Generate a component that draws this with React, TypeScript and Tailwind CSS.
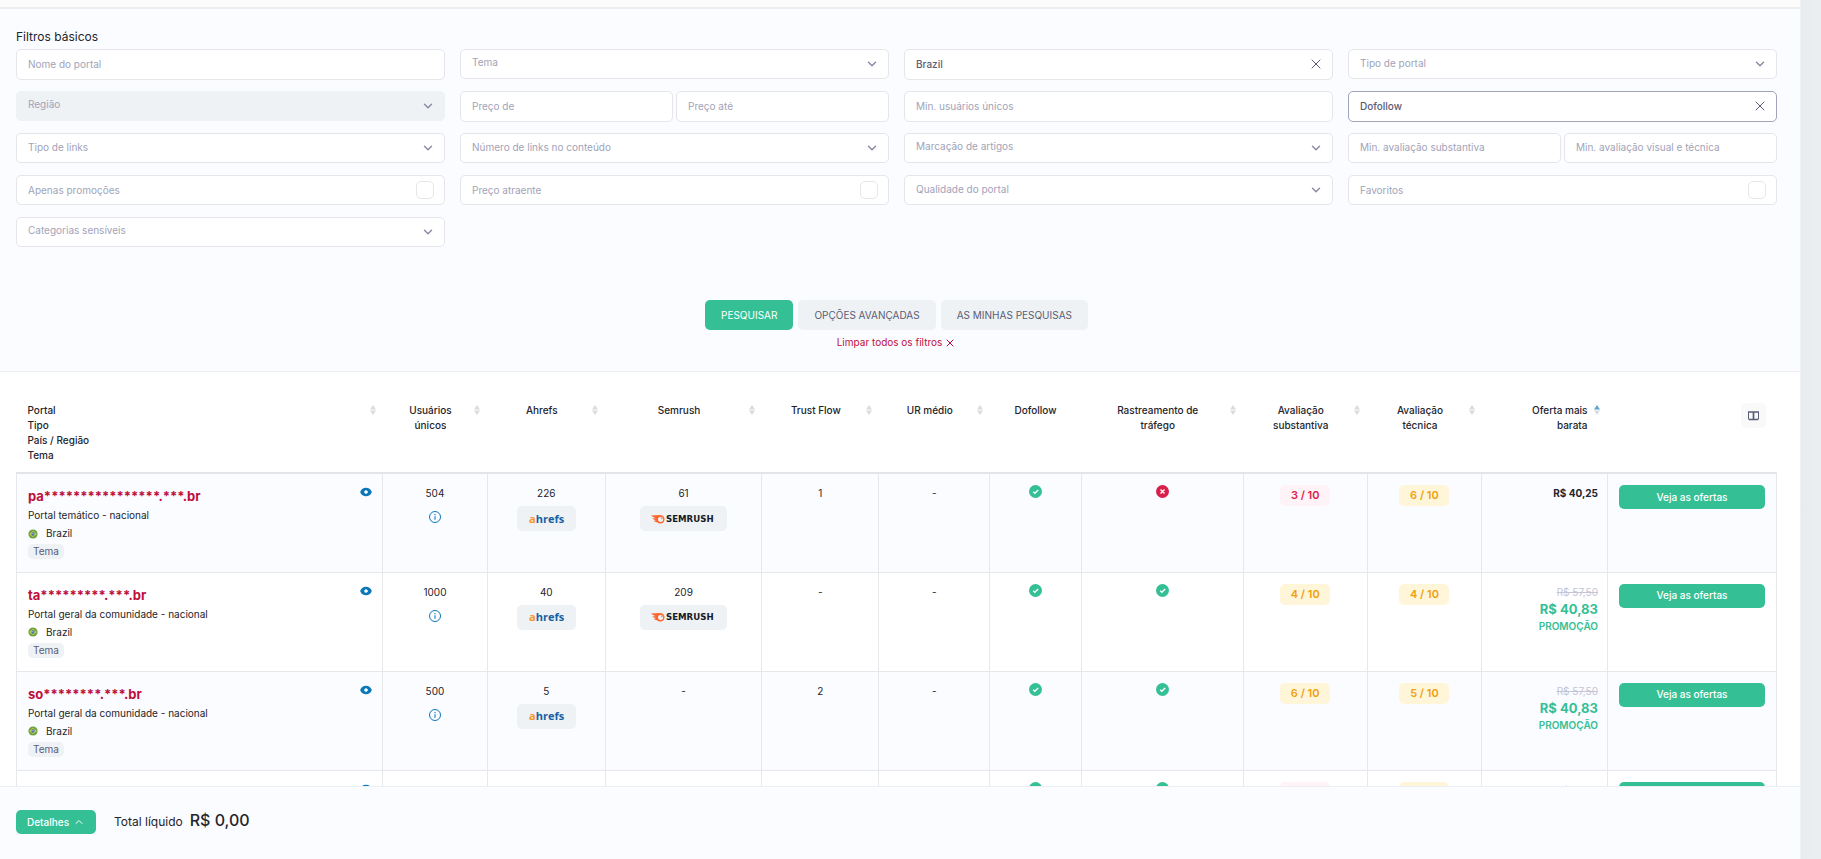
import type { ReactNode } from 'react';
import { ChevronDown, ChevronUp, X, Eye } from 'lucide-react';

type Site = {
  name: string;
  kind: string;
  users: string;
  ahrefs: string;
  semrush: string | null;
  trust: string;
  tracking: boolean;
  content: number;
  technical: number;
  price: string;
  oldPrice?: string;
};

const SITES: Site[] = [
  { name: 'pa****************.***.br', kind: 'Portal temático - nacional', users: '504', ahrefs: '226', semrush: '61', trust: '1', tracking: false, content: 3, technical: 6, price: 'R$ 40,25' },
  { name: 'ta*********.***.br', kind: 'Portal geral da comunidade - nacional', users: '1000', ahrefs: '40', semrush: '209', trust: '-', tracking: true, content: 4, technical: 4, price: 'R$ 40,83', oldPrice: 'R$ 57,50' },
  { name: 'so********.***.br', kind: 'Portal geral da comunidade - nacional', users: '500', ahrefs: '5', semrush: null, trust: '2', tracking: true, content: 6, technical: 5, price: 'R$ 40,83', oldPrice: 'R$ 57,50' },
  { name: 'jo********.***.br', kind: 'Portal geral da comunidade - nacional', users: '500', ahrefs: '12', semrush: null, trust: '-', tracking: true, content: 3, technical: 5, price: 'R$ 40,83', oldPrice: 'R$ 57,50' },
];

const COLUMNS = [
  { label: 'Usuários únicos', pad: 'pl-[11px] pr-5', sortable: true },
  { label: 'Ahrefs', pad: 'pl-[11px] pr-5', sortable: true },
  { label: 'Semrush', pad: 'pl-[11px] pr-5', sortable: true },
  { label: 'Trust Flow', pad: 'pl-[11px] pr-5', sortable: true },
  { label: 'UR médio', pad: 'pl-[11px] pr-5', sortable: true },
  { label: 'Dofollow', pad: 'px-[11px]', sortable: false },
  { label: 'Rastreamento de tráfego', pad: 'pl-[23px] pr-8', sortable: true },
  { label: 'Avaliação substantiva', pad: 'pl-[11px] pr-5', sortable: true },
  { label: 'Avaliação técnica', pad: 'pl-[11px] pr-5', sortable: true },
];

function TextField({ label, short }: { label: string; short?: boolean }) {
  return (
    <input
      type="text"
      aria-label={label}
      placeholder={label}
      className={`w-full min-w-0 rounded-[5px] border border-[#e4e6e9] bg-white px-[11px] pb-[2px] text-[10px] text-[#5a5c75] placeholder:text-[#a1a3b9] ${short ? 'h-[30px]' : 'h-[31px]'}`}
    />
  );
}

function SelectField({ label, raised, disabled }: { label: string; raised?: boolean; disabled?: boolean }) {
  return (
    <div className="relative">
      <select
        aria-label={label}
        disabled={disabled}
        className={`h-[30px] w-full appearance-none rounded-[5px] border px-[11px] text-[10px] text-[#a1a3b9] opacity-100 ${raised ? 'pb-1' : 'pb-px'} ${disabled ? 'border-[#eef2f5] bg-[#eef2f5]' : 'border-[#e4e6e9] bg-white'}`}
      >
        <option>{label}</option>
      </select>
      <ChevronDown size={14} strokeWidth={2.5} className="pointer-events-none absolute top-2 right-[10px] text-[#8a8ca5]" />
    </div>
  );
}

function ChosenField({ label, value, active }: { label: string; value: string; active?: boolean }) {
  return (
    <div className="relative">
      <select
        aria-label={label}
        className={`h-[31px] w-full appearance-none rounded-[5px] border bg-white px-[11px] text-[10px] font-medium text-[#5a5c75] ${active ? 'border-[#a1a3b9]' : 'border-[#e4e6e9]'}`}
      >
        <option>{value}</option>
      </select>
      <button type="button" aria-label={`Limpar ${label}`} className="absolute top-[7px] right-[9px] text-[#5a5c75]">
        <X size={16} strokeWidth={1.5} />
      </button>
    </div>
  );
}

function CheckField({ label }: { label: string }) {
  return (
    <label className="flex h-[30px] items-center justify-between rounded-[5px] border border-[#e4e6e9] bg-white pr-[10px] pl-[11px] text-[10px] text-[#a1a3b9]">
      {label}
      <input type="checkbox" className="size-[18px] appearance-none rounded-[5px] border border-[#e4e6e9] bg-white" />
    </label>
  );
}

function SortArrows({ active }: { active?: boolean }) {
  return (
    <svg width="6" height="10" viewBox="0 0 6 10" className="absolute top-2 right-[7px]">
      <path d="M3 0 L6 4.6 H0 Z" fill={active ? '#5ba3d0' : '#d9dbde'} />
      <path d="M3 10 L6 5.6 H0 Z" fill="#d9dbde" />
    </svg>
  );
}

function Flag() {
  return (
    <svg width="10" height="10" viewBox="0 0 10 10">
      <circle cx="5" cy="5" r="4.6" fill="#6da544" />
      <path d="M5 2 L8.7 5 L5 8 L1.3 5 Z" fill="#d8cf45" />
      <circle cx="5" cy="5" r="1.7" fill="#2463b4" />
      <path d="M3.5 4.6 Q5 4.3 6.5 5.6" stroke="#f0f0f0" strokeWidth="0.6" fill="none" />
    </svg>
  );
}

function InfoIcon() {
  return (
    <svg width="12" height="12" viewBox="0 0 12 12" fill="none" stroke="#0d78b8">
      <circle cx="6" cy="6" r="5.5" />
      <path d="M6 5.2 V8.8 M6 3 V4.2" strokeWidth="1.1" />
    </svg>
  );
}

function StatusIcon({ ok }: { ok: boolean }) {
  return (
    <svg width="13" height="13" viewBox="0 0 13 13" className="mx-auto" fill="none" stroke="#fff" strokeWidth="1.4">
      <circle cx="6.5" cy="6.5" r="6.5" fill={ok ? '#35bf95' : '#d91f4a'} stroke="none" />
      {ok ? <path d="M4.2 6.8 L5.8 8.2 L9.2 4.9" /> : <path d="M4.5 4.5 L8.5 8.5 M8.5 4.5 L4.5 8.5" />}
    </svg>
  );
}

function AhrefsLogo() {
  return (
    <svg width="37" height="14" viewBox="0 0 37 14" role="img" aria-label="ahrefs">
      <text x="1" y="11" fontFamily="'Open Sans', sans-serif" fontSize="11" fontWeight="700">
        <tspan fill="#f9962c">a</tspan>
        <tspan fill="#1561a4">hrefs</tspan>
      </text>
    </svg>
  );
}

function SemrushLogo() {
  return (
    <svg width="65" height="12" viewBox="0 0 65 12" role="img" aria-label="Semrush">
      <path
        d="M0 2.6 C3 2.4 6 2 9.4 2 A4.3 4.3 0 1 1 6 9.2 C4.6 9 3.4 8.6 2.8 7.8 L5 7.6 C3.6 7 2.2 6.2 1.2 5.2 L4.8 5.2 C3 4.4 1 3.6 0 2.6 Z"
        fill="#ff642d"
      />
      <circle cx="9.6" cy="6.3" r="2.6" fill="#eef2f5" />
      <path d="M9.6 4.7 A1.6 1.6 0 0 1 11.2 6.3" stroke="#ff642d" strokeWidth="0.9" fill="none" />
      <text x="15" y="9" fontFamily="'DejaVu Sans', sans-serif" fontSize="8.6" fontWeight="700" fill="#171a22">
        SEMRUSH
      </text>
    </svg>
  );
}

function LogoBadge({ children }: { children: ReactNode }) {
  return (
    <button type="button" className="mt-[5px] inline-flex h-[25px] items-center rounded-[5px] bg-[#eef2f5] px-[11px]">
      {children}
    </button>
  );
}

function Score({ value }: { value: number }) {
  return (
    <span
      className={`inline-flex h-[21px] w-[50px] items-center justify-center rounded-[5px] text-[11px] font-semibold ${value < 4 ? 'bg-[#fff3f7] text-[#d91f4a]' : 'bg-[#fff6da] text-[#f0a00c]'}`}
    >
      {value} / 10
    </span>
  );
}

function SiteRow({ site }: { site: Site }) {
  const cell = 'border border-[#e6e8eb] px-[11px] pt-[11px] text-center align-top';
  return (
    <tr className="h-[99px] odd:bg-[#fbfcff]">
      <td className="border border-[#e6e8eb] pt-[11px] pr-[10px] pl-[11px] align-top">
        <div className="flex items-start justify-between">
          <a href="#" className="pt-[3px] text-[13px] leading-[17px] font-bold text-[#be0f3c]">
            {site.name}
          </a>
          <button type="button" aria-label="Ocultar portal" className="pt-px">
            <Eye size={12} fill="#0d78b8" stroke="#0d78b8" strokeWidth={3} className="[&_circle]:fill-white [&_circle]:stroke-white [&_circle]:stroke-1" />
          </button>
        </div>
        <div className="mt-[3px] leading-[15px]">{site.kind}</div>
        <div className="mt-[3px] flex items-center gap-2 leading-[15px]">
          <Flag />
          Brazil
        </div>
        <span className="mt-[3px] block w-fit rounded-[5px] bg-[#eef2f5] px-[5px] leading-[15px] text-[#5a5c75]">Tema</span>
      </td>
      <td className={cell}>
        <div className="leading-4">{site.users}</div>
        <button type="button" aria-label="Informações" className="mt-[10px]">
          <InfoIcon />
        </button>
      </td>
      <td className={cell}>
        <div className="leading-4">{site.ahrefs}</div>
        <LogoBadge><AhrefsLogo /></LogoBadge>
      </td>
      <td className={cell}>
        <div className="leading-4">{site.semrush ?? '-'}</div>
        {site.semrush && <LogoBadge><SemrushLogo /></LogoBadge>}
      </td>
      <td className={cell}><div className="leading-4">{site.trust}</div></td>
      <td className={cell}><div className="leading-4">-</div></td>
      <td className={cell}><StatusIcon ok /></td>
      <td className={cell}><StatusIcon ok={site.tracking} /></td>
      <td className={cell}><Score value={site.content} /></td>
      <td className={cell}><Score value={site.technical} /></td>
      <td className="border border-[#e6e8eb] px-[9px] pt-[11px] text-right align-top">
        {site.oldPrice ? (
          <>
            <del className="block leading-4 text-[#c3c4d4]">{site.oldPrice}</del>
            <div className="text-[13px] leading-[18px] font-bold text-[#35bf95]">{site.price}</div>
            <div className="text-[10px] leading-4 font-semibold text-[#35bf95]">PROMOÇÃO</div>
          </>
        ) : (
          <div className="leading-4 font-bold">{site.price}</div>
        )}
      </td>
      <td className={cell}>
        <button type="button" className="block h-6 w-full rounded-[5px] bg-[#35bf95] text-[10px] font-medium text-white">
          Veja as ofertas
        </button>
      </td>
    </tr>
  );
}

export default function App() {
  return (
    <div className="flex h-screen bg-[#ebeff2] font-[Inter,sans-serif] text-[10px] text-[#23242c]">
      <div className="flex min-w-0 flex-1 flex-col border-r border-[#eef0f3] bg-white">
        <main className="min-h-0 flex-1 overflow-hidden">
          <div className="h-[9px] border-b-2 border-[#eceef0] bg-[#fbfbfb]" />

          <form className="border-b border-[#eceef2] bg-[#fbfcff] pt-[18px] pr-[23px] pb-[21px] pl-4" onSubmit={(e) => e.preventDefault()}>
            <h2 className="mb-[2px] text-[12px] leading-5">Filtros básicos</h2>
            <div className="grid auto-rows-[42px] grid-cols-4 items-start gap-x-[15px]">
              <TextField label="Nome do portal" />
              <SelectField label="Tema" raised />
              <ChosenField label="País" value="Brazil" />
              <SelectField label="Tipo de portal" />

              <SelectField label="Região" raised disabled />
              <div className="flex gap-[3px]">
                <TextField label="Preço de" />
                <TextField label="Preço até" />
              </div>
              <TextField label="Min. usuários únicos" />
              <ChosenField label="Seguimento" value="Dofollow" active />

              <SelectField label="Tipo de links" />
              <SelectField label="Número de links no conteúdo" />
              <SelectField label="Marcação de artigos" raised />
              <div className="flex gap-[3px]">
                <TextField label="Min. avaliação substantiva" short />
                <TextField label="Min. avaliação visual e técnica" short />
              </div>

              <CheckField label="Apenas promoções" />
              <CheckField label="Preço atraente" />
              <SelectField label="Qualidade do portal" />
              <CheckField label="Favoritos" />

              <SelectField label="Categorias sensíveis" raised />
            </div>

            <div className="mt-[41px] flex justify-center gap-[5px]">
              <button type="submit" className="h-[30px] rounded-[5px] bg-[#35bf95] px-4 text-white">PESQUISAR</button>
              <button type="button" className="h-[30px] rounded-[5px] bg-[#eef2f5] px-4 text-[#5a5c75]">OPÇÕES AVANÇADAS</button>
              <button type="button" className="h-[30px] rounded-[5px] bg-[#eef2f5] px-4 text-[#5a5c75]">AS MINHAS PESQUISAS</button>
            </div>
            <button type="reset" className="mx-auto mt-[5px] flex h-[15px] items-center gap-[2px] text-[#be0f3c]">
              Limpar todos os filtros
              <X size={12} />
            </button>
          </form>

          <div className="pt-[25px] pr-[23px] pl-4">
            <table className="w-full table-fixed border-collapse">
              <colgroup>
                <col className="w-[20.8%]" />
                <col className="w-[5.95%]" />
                <col className="w-[6.7%]" />
                <col className="w-[8.9%]" />
                <col className="w-[6.65%]" />
                <col className="w-[6.3%]" />
                <col className="w-[5.2%]" />
                <col className="w-[9.2%]" />
                <col className="w-[7.05%]" />
                <col className="w-[6.5%]" />
                <col className="w-[7.15%]" />
                <col className="w-[9.6%]" />
              </colgroup>
              <thead>
                <tr className="h-[76px] border-b-2 border-[#e2e4e7]">
                  <th className="relative px-[11px] pt-[6px] text-left align-top leading-[15px] font-medium">
                    Portal<br />Tipo<br />País / Região<br />Tema
                    <SortArrows />
                  </th>
                  {COLUMNS.map((col) => (
                    <th key={col.label} className={`relative pt-[6px] align-top leading-[15px] font-medium ${col.pad}`}>
                      {col.label}
                      {col.sortable && <SortArrows />}
                    </th>
                  ))}
                  <th className="relative pt-[6px] pr-5 pl-10 text-right align-top leading-[15px] font-medium">
                    Oferta mais barata
                    <SortArrows active />
                  </th>
                  <th className="pt-[6px] pr-[11px] align-top">
                    <button type="button" aria-label="Colunas" className="ml-auto flex size-[25px] items-center justify-center rounded-[5px] bg-[#f9f9f9]">
                      <svg width="11" height="10" viewBox="0 0 11 10" fill="none" stroke="#5a5c75">
                        <path d="M0.5 1 V8.5 M10.5 1 V8.5" />
                        <path d="M0 1 H11 M1 8.5 H10 M5.5 1 V8" strokeWidth="1.7" />
                      </svg>
                    </button>
                  </th>
                </tr>
              </thead>
              <tbody>
                {SITES.map((site) => (
                  <SiteRow key={site.name} site={site} />
                ))}
              </tbody>
            </table>
          </div>
        </main>

        <footer className="flex h-[73px] items-start border-t border-[#eceff4] bg-[#fbfcff] px-4 pt-[23px]">
          <button type="button" className="flex h-6 items-center gap-1 rounded-[5px] bg-[#35bf95] px-[11px] font-medium text-white">
            Detalhes
            <ChevronUp size={12} />
          </button>
          <p className="ml-[18px] flex items-baseline gap-[7px] text-[12px] leading-5">
            Total líquido
            <strong className="text-[16px] font-medium">R$ 0,00</strong>
          </p>
        </footer>
      </div>
      <aside className="w-5 shrink-0 bg-linear-to-r from-[#e8ecef] to-[#ebeff2]" />
    </div>
  );
}
